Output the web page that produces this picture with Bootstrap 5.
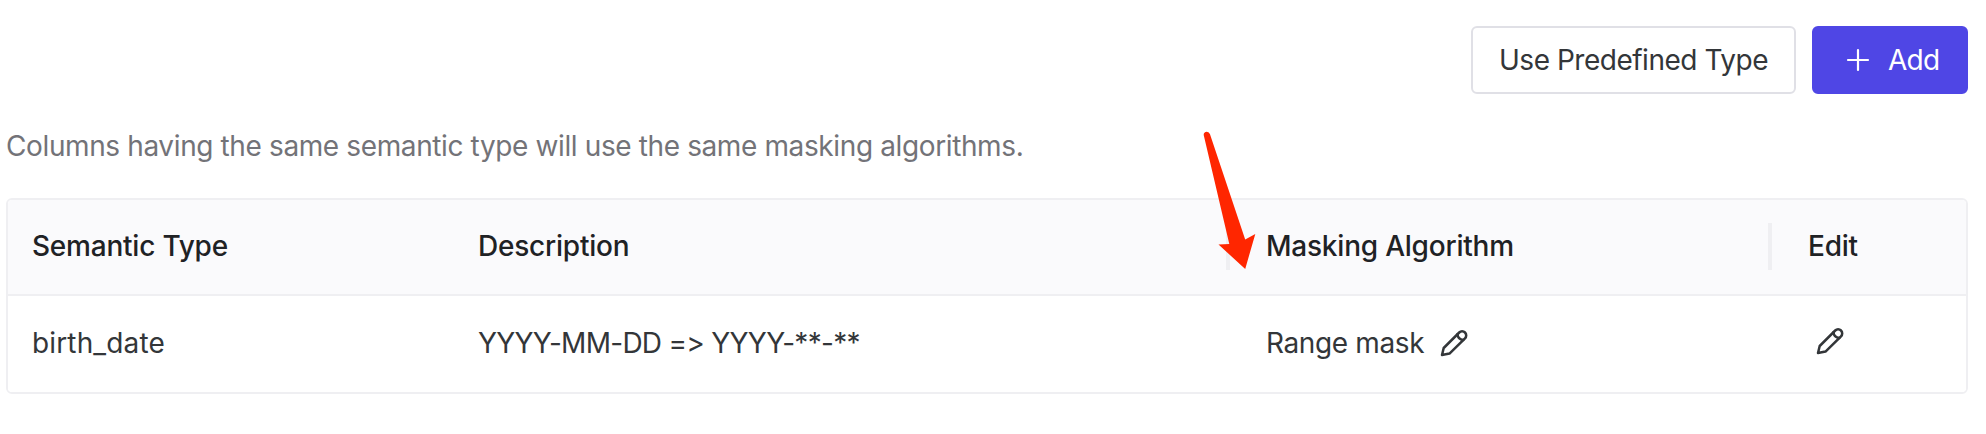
<!DOCTYPE html>
<html lang="en">
<head>
<meta charset="utf-8">
<meta name="viewport" content="width=device-width, initial-scale=1">
<title>Semantic Types</title>
<link rel="stylesheet" href="https://cdn.jsdelivr.net/npm/bootstrap@5.3.0/dist/css/bootstrap.min.css">
<style>
  body {
    font-family: Inter, "Liberation Sans", sans-serif;
    font-size: 28px;
    line-height: 44px;
    letter-spacing: -.38px;
    font-feature-settings: "calt" 0, "liga" 0;
    color: #333639;
    background: #fff;
  }
  .page { padding: 26px 18px 0 6px; }
  .tool-btn {
    --bs-btn-font-size: 28px;
    --bs-btn-line-height: 44px;
    --bs-btn-border-radius: 6px;
    --bs-btn-border-width: 2px;
    --bs-btn-padding-y: 10px;
    height: 68px;
    letter-spacing: inherit;
  }
  .btn-predefined { --bs-btn-color: #333639; --bs-btn-border-color: #e0e0e6; --bs-btn-bg: #fff; width: 325px; letter-spacing: -.48px; }
  .btn-add { --bs-btn-color: #fff; --bs-btn-bg: #4f46e5; --bs-btn-border-color: #4f46e5; width: 156px; padding-left: 32px; gap: 18px; letter-spacing: -.7px; }
  .hint { color: #737378; margin-top: 30px; line-height: 44px; }
  .grid-wrap { border: 2px solid #efeff2; border-radius: 6px; margin-top: 30px; overflow: hidden; }
  .type-table { table-layout: fixed; --bs-table-color: #333639; --bs-table-bg: #fff; }
  .type-table > thead > tr > th {
    --bs-table-bg: #fafafc;
    position: relative;
    height: 95px;
    padding: 0 24px 2px;
    border-bottom: 2px solid #efeff2;
    vertical-align: middle;
    font-weight: 500;
    color: #1f2225;
    letter-spacing: -.22px;
  }
  .type-table > tbody > tr > td { height: 97px; padding: 0 24px 2px; border: 0; }
  .resizer::after {
    content: "";
    position: absolute;
    right: 12px;
    top: 23px;
    width: 4px;
    height: 47px;
    background: #efeff2;
  }
  .type-name { letter-spacing: .15px; }
  .type-desc { letter-spacing: -.72px; }
  .row-edit { margin: 0 0 5px 8px; }
  .pointer { position: absolute; left: 1196px; top: 120px; }
</style>
</head>
<body>
<svg width="0" height="0" class="position-absolute" aria-hidden="true">
  <symbol id="pencil" viewBox="0 0 28 28">
    <g fill="none" stroke="#333639" stroke-width="2.5" stroke-linejoin="round" stroke-linecap="round">
      <path d="M2 26 3.7 19 19.2 3.5a4.1 4.1 0 0 1 5.8 0 4.1 4.1 0 0 1 0 5.8L9.5 24.6Z"/>
      <path d="M17.500 5.200c.2 3.200 2.300 5.500 5.800 5.700"/>
    </g>
  </symbol>
</svg>
<main class="page">
  <div class="d-flex justify-content-end gap-3">
    <button type="button" class="btn tool-btn btn-predefined px-0 text-nowrap">Use Predefined Type</button>
    <button type="button" class="btn tool-btn btn-add d-flex align-items-center text-nowrap">
      <svg class="flex-shrink-0" width="24" height="24" viewBox="0 0 24 24" fill="none" stroke="#fff" stroke-width="2.200" stroke-linecap="round" aria-hidden="true"><path d="M12 2v20M2 12h20"/></svg>
      <span>Add</span>
    </button>
  </div>
  <p class="hint mb-0">Columns having the same semantic type will use the same masking algorithms.</p>
  <div class="grid-wrap">
    <table class="table type-table align-middle mb-0">
      <colgroup><col style="width:446px"><col style="width:788px"><col style="width:542px"><col></colgroup>
      <thead>
        <tr><th>Semantic Type</th><th class="resizer">Description</th><th class="resizer">Masking Algorithm</th><th>Edit</th></tr>
      </thead>
      <tbody>
        <tr>
          <td class="type-name">birth_date</td>
          <td class="type-desc">YYYY-MM-DD =&gt; YYYY-**-**</td>
          <td><div class="d-flex align-items-center"><span>Range mask</span><svg class="ms-3" width="28" height="28" role="img" aria-label="Edit algorithm"><use href="#pencil"/></svg></div></td>
          <td><svg class="d-block row-edit" width="28" height="28" role="img" aria-label="Edit type"><use href="#pencil"/></svg></td>
        </tr>
      </tbody>
    </table>
  </div>
  <svg class="pointer" width="70" height="160" viewBox="0 0 70 160" fill="#ff2600" aria-hidden="true"><path d="M7.700 15Q7.600 12 10.800 11.700 13.200 11.700 14 14.200L49.200 119.500 59.300 114 49.200 149 22.500 124.500 33.300 124Z"/></svg>
</main>
<script src="https://cdn.jsdelivr.net/npm/bootstrap@5.3.0/dist/js/bootstrap.bundle.min.js"></script>
</body>
</html>
